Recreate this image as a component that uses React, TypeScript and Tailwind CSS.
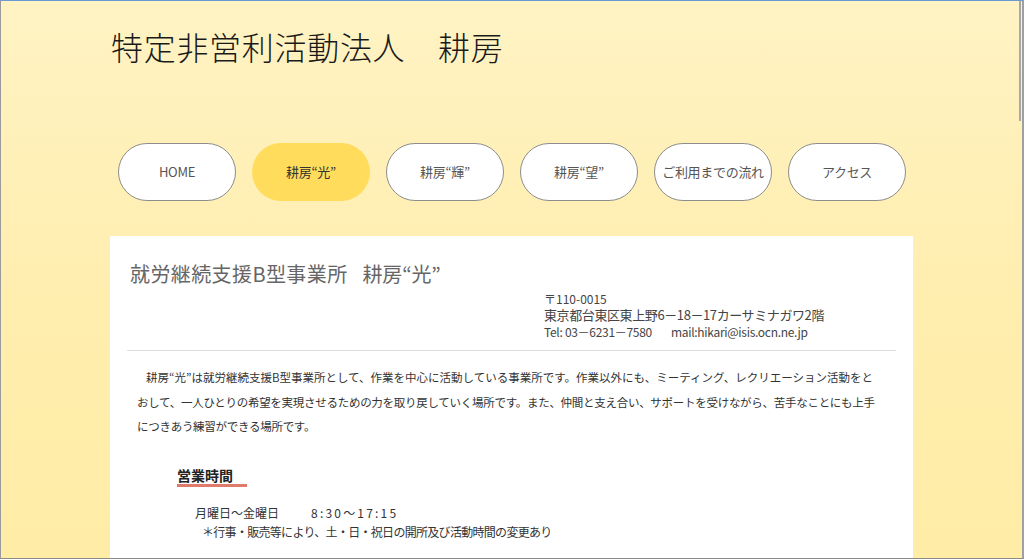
const navItems = [
	{ label: 'HOME', active: false },
	{ label: '耕房“光”', active: true },
	{ label: '耕房“輝”', active: false },
	{ label: '耕房“望”', active: false },
	{ label: 'ご利用までの流れ', active: false },
	{ label: 'アクセス', active: false },
];

const jp = "font-['Noto_Sans_CJK_JP',sans-serif]";

const App = () => {
	return (
		<div className="relative h-[559px] w-full overflow-hidden border-t border-l border-r-2 border-b border-t-[#6a9ad6] border-l-[#9a9a9a] border-r-[#a0a0a0] border-b-[#8a8a8a] bg-gradient-to-b from-[#fff3c4] via-[#ffeeaf] to-[#ffeca6]">
			{/* scrollbar thumb */}
			<div className="absolute right-[1px] top-0 h-[120px] w-[2px] bg-[#a8a8a8]" />

			<div className={`${jp} mx-auto w-[803px]`}>
				<h1 className="mt-[25px] pl-[1px] text-[32px] font-light leading-[40px] tracking-[0.7px] text-[#1a1a1a]">
					特定非営利活動法人　耕房
				</h1>

				<nav className="mt-[77px] flex gap-[16px] pl-[8px]">
					{navItems.map((item) => (
						<a
							key={item.label}
							className={`flex h-[58px] w-[118px] items-center justify-center rounded-full text-[13px] tracking-[-0.3px] ${
								item.active
									? 'bg-[#ffdc5c] text-[#333]'
									: 'border border-[#8c8c8c] bg-white text-[#555]'
							}`}
						>
							{item.label}
						</a>
					))}
				</nav>

				<main className="mt-[35px] bg-white px-[17px] pb-10">
					<h2 className="pl-[3px] pt-[24px] text-[20px] font-normal leading-[28px] tracking-[0.4px] text-[#666]">
						就労継続支援B型事業所<span className="ml-[15px] tracking-[-0.2px]">耕房“光”</span>
					</h2>

					<div className="ml-[417px] mt-[3px] text-[#444]">
						<p className="text-[12px] leading-[16px]">〒110-0015</p>
						<p className="text-[13px] leading-[16px] tracking-[-0.4px]">東京都台東区東上野6－18－17カーサミナガワ2階</p>
						<p className="text-[12px] leading-[17px] tracking-[-0.3px]">
							Tel: 03－6231－7580<span className="ml-[19px]">mail:hikari@isis.ocn.ne.jp</span>
						</p>
					</div>

					<hr className="mt-[10px] border-[#dedede]" />

					<p className="mt-[14px] pl-[10px] text-[11.5px] leading-[24.5px] tracking-[-0.28px] text-[#333] whitespace-nowrap">
						<span className="pl-[9px] tracking-[0px]">耕房“光”は就労継続支援B型事業所として、作業を中心に活動している事業所です。作業以外にも、ミーティング、レクリエーション活動をと</span>
						<br />
						おして、一人ひとりの希望を実現させるための力を取り戻していく場所です。また、仲間と支え合い、サポートを受けながら、苦手なことにも上手
						<br />
						につきあう練習ができる場所です。
					</p>

					<section className="mt-[23px] pl-[50px]">
						<h3 className="inline-block border-b-[3px] border-[#e07a6c] pr-[14px] text-[14px] font-bold leading-[18px] text-[#222]">
							営業時間
						</h3>
						<div className="mt-[16px] pl-[18px] text-[12px] leading-[19px] text-[#333]">
							<p>
								月曜日～金曜日<span className="ml-[32px] tracking-[2.2px]">8:30～17:15</span>
							</p>
							<p className="pl-[7px] tracking-[-0.7px]">＊行事・販売等により、土・日・祝日の開所及び活動時間の変更あり</p>
						</div>
					</section>

					<section className="mt-[15px] pl-[50px]">
						<h3 className="inline-block border-b-[3px] border-[#e07a6c] pr-[14px] text-[14px] font-bold leading-[18px] text-[#222]">
							活動内容
						</h3>
					</section>
				</main>
			</div>
		</div>
	);
};

export default App;
